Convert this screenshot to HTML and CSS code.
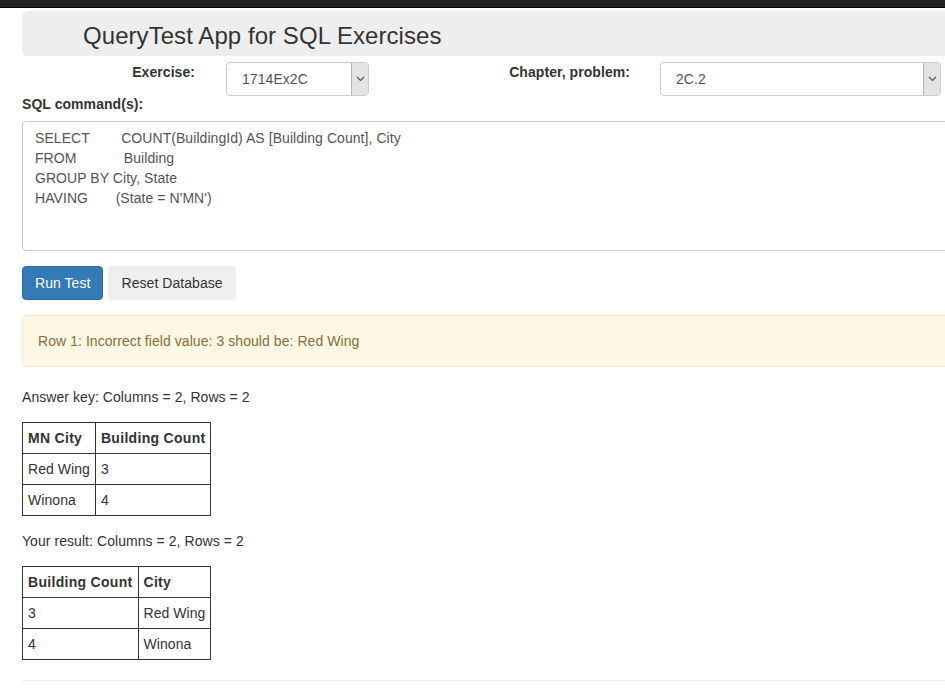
FILE: index.html
```html
<!DOCTYPE html>
<html>
<head>
<meta charset="utf-8">
<title>QueryTest App for SQL Exercises</title>
<link rel="stylesheet" href="styles.css">
</head>
<body>
<div class="topbar"></div>
<div class="container">
  <div class="jumbotron"><h1>QueryTest App for SQL Exercises</h1></div>
  <div class="form-row">
    <label class="lbl lbl-ex">Exercise:</label>
    <div class="select sel-ex"><span class="val">1714Ex2C</span><span class="arrow"><svg width="9" height="6" viewBox="0 0 9 6"><polyline points="1,1 4.5,4.5 8,1" fill="none" stroke="#555" stroke-width="1.2"/></svg></span></div>
    <label class="lbl lbl-ch">Chapter, problem:</label>
    <div class="select sel-ch"><span class="val">2C.2</span><span class="arrow"><svg width="9" height="6" viewBox="0 0 9 6"><polyline points="1,1 4.5,4.5 8,1" fill="none" stroke="#555" stroke-width="1.2"/></svg></span></div>
  </div>
  <label class="sql-label">SQL command(s):</label>
  <div class="sql-box"><div class="sql-line">SELECT        COUNT(BuildingId) AS [Building Count], City</div><div class="sql-line">FROM            Building</div><div class="sql-line">GROUP BY City, State</div><div class="sql-line">HAVING       (State = N'MN')</div></div>
  <div class="buttons">
    <button class="btn btn-primary">Run Test</button>
    <button class="btn btn-default">Reset Database</button>
  </div>
  <div class="alert">Row 1: Incorrect field value: 3 should be: Red Wing</div>
  <p class="summary">Answer key: Columns = 2, Rows = 2</p>
  <table class="result">
    <tr><th>MN City</th><th>Building Count</th></tr>
    <tr><td>Red Wing</td><td>3</td></tr>
    <tr><td>Winona</td><td>4</td></tr>
  </table>
  <p class="summary second">Your result: Columns = 2, Rows = 2</p>
  <table class="result">
    <tr><th>Building Count</th><th>City</th></tr>
    <tr><td>3</td><td>Red Wing</td></tr>
    <tr><td>4</td><td>Winona</td></tr>
  </table>
  <hr class="rule">
</div>
</body>
</html>
```
FILE: styles.css
```css
html, body {
  margin: 0;
  padding: 0;
  overflow-x: hidden;
  background: #fff;
}
body {
  font-family: "Liberation Sans", Arial, sans-serif;
  font-size: 14px;
  line-height: 20px;
  color: #333;
  letter-spacing: 0.06px;
}
.topbar {
  height: 7px;
  background: #222;
  border-bottom: 1px solid #080808;
}
.container {
  width: 1140px;
  padding-left: 22px;
}
.jumbotron {
  margin-top: 3px;
  height: 45px;
  box-sizing: border-box;
  padding: 5px 0 0 61px;
  background: #eee;
  border-radius: 6px;
}
.jumbotron h1 {
  margin: 0;
  font-size: 24px;
  font-weight: normal;
  line-height: 40px;
  color: #333;
}
.form-row {
  display: flex;
  margin-top: 6px;
  height: 34px;
}
.lbl {
  font-weight: bold;
  text-align: right;
  padding-right: 15px;
  box-sizing: border-box;
}
.lbl-ex { width: 188px; }
.lbl-ch { width: 276px; }
.select {
  display: flex;
  box-sizing: border-box;
  height: 34px;
  border: 1px solid #ccc;
  border-radius: 4px;
  background: #fff;
  color: #555;
  margin-left: 16px;
}
.sel-ex { width: 143px; }
.sel-ch { width: 281px; margin-left: 15px; }
.select .val {
  flex: 1;
  padding-left: 15px;
  line-height: 32px;
}
.select .arrow {
  width: 16px;
  background: #e3e3e3;
  border-left: 1px solid #b5b5b5;
  border-radius: 0 3px 3px 0;
  display: flex;
  align-items: center;
  justify-content: center;
}
.sql-label {
  display: block;
  font-weight: bold;
  margin-top: -2px;
  margin-bottom: 7px;
}
.sql-box {
  box-sizing: border-box;
  height: 130px;
  padding: 6px 12px;
  border: 1px solid #ccc;
  border-radius: 4px;
  color: #555;
  white-space: pre;
}
.buttons {
  display: flex;
  gap: 5px;
  margin-top: 15px;
}
.btn {
  font-family: inherit;
  font-size: 14px;
  line-height: 20px;
  letter-spacing: 0.06px;
  height: 34px;
  padding: 6px 12px;
  border: 1px solid transparent;
  border-radius: 4px;
  cursor: pointer;
}
.btn-primary {
  background: #337ab7;
  border-color: #2e6da4;
  color: #fff;
}
.btn-default {
  background: #efefef;
  color: #333;
}
.alert {
  margin-top: 15px;
  padding: 15px;
  background: #fcf8e3;
  border: 1px solid #faebcc;
  border-radius: 4px;
  color: #8a6d3b;
}
.summary {
  margin: 20px 0 15px;
}
.summary.second {
  margin: 15px 0 15px;
}
.result {
  border-collapse: collapse;
}
.result th, .result td {
  border: 1px solid #333;
  padding: 5px;
  text-align: left;
  line-height: 20px;
}
.result th {
  font-weight: bold;
  letter-spacing: 0.3px;
}
.rule {
  margin: 20px 0 0;
  border: 0;
  border-top: 1px solid #eee;
}
```
